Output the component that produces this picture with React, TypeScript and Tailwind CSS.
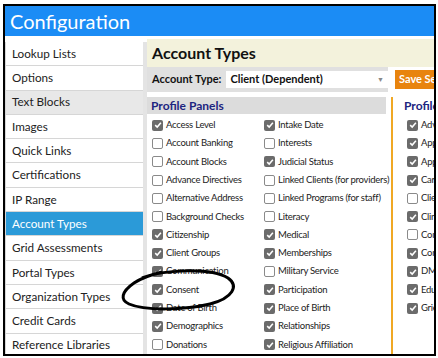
const menu = [
  "Lookup Lists",
  "Options",
  "Text Blocks",
  "Images",
  "Quick Links",
  "Certifications",
  "IP Range",
  "Account Types",
  "Grid Assessments",
  "Portal Types",
  "Organization Types",
  "Credit Cards",
  "Reference Libraries",
];

const colOne: [string, boolean][] = [
  ["Access Level", true],
  ["Account Banking", false],
  ["Account Blocks", false],
  ["Advance Directives", false],
  ["Alternative Address", false],
  ["Background Checks", false],
  ["Citizenship", true],
  ["Client Groups", true],
  ["Communication", true],
  ["Consent", true],
  ["Date of Birth", true],
  ["Demographics", true],
  ["Donations", false],
];

const colTwo: [string, boolean][] = [
  ["Intake Date", true],
  ["Interests", false],
  ["Judicial Status", true],
  ["Linked Clients (for providers)", false],
  ["Linked Programs (for staff)", false],
  ["Literacy", false],
  ["Medical", true],
  ["Memberships", true],
  ["Military Service", false],
  ["Participation", true],
  ["Place of Birth", true],
  ["Relationships", true],
  ["Religious Affiliation", true],
];

const colThree: [string, boolean][] = [
  ["Advocates", true],
  ["Appointments", true],
  ["Applications", true],
  ["Caregivers", true],
  ["Client Notes", false],
  ["Clinical", true],
  ["Complaints", false],
  ["Contacts", true],
  ["DME", true],
  ["Education", true],
  ["Grievances", true],
];

const Box = ({ checked }: { checked: boolean }) => (
  <span
    className={
      checked
        ? "w-[11px] h-[11px] rounded-[2px] bg-[#6b6b6b] flex items-center justify-center shrink-0"
        : "w-[11px] h-[11px] rounded-[2px] bg-white border border-[#8a8a8a] shrink-0"
    }
  >
    {checked && (
      <svg width="8" height="8" viewBox="0 0 10 10">
        <path d="M1.5 5.2 L4 7.6 L8.6 2.2" fill="none" stroke="white" strokeWidth="1.9" />
      </svg>
    )}
  </span>
);

const CheckList = ({ items }: { items: [string, boolean][] }) => (
  <div className="flex flex-col">
    {items.map(([label, checked]) => (
      <div key={label} className="h-[18.3px] flex items-center gap-[3px] whitespace-nowrap">
        <Box checked={checked} />
        <span className="text-[9.5px] tracking-[-0.25px] text-[#222]">{label}</span>
      </div>
    ))}
  </div>
);

export default function App() {
  return (
    <div className="w-[438px] h-[358px] bg-white overflow-hidden pt-[4px] pl-[3px] font-['Lato',sans-serif]">
      <div className="relative w-[433px] h-[352px] border-2 border-black overflow-hidden bg-white">
        <div className="h-[30px] bg-[#1b8cf5] flex items-center pl-[5px] text-white text-[20px] leading-none">
          Configuration
        </div>
        <div className="flex pt-[3px]">
          <div className="w-[142px] shrink-0 mt-[3px] flex flex-col border-r-[4px] border-[#e4e4e4]">
            {menu.map((m) => (
              <div
                key={m}
                className={
                  m === "Account Types"
                    ? "h-[24.3px] flex items-center pl-[6px] text-[11.7px] whitespace-nowrap bg-[#2b9ad8] text-white border-b border-l border-[#d6d6d6]"
                    : m === "Text Blocks"
                    ? "h-[24.3px] flex items-center pl-[6px] text-[11.7px] whitespace-nowrap bg-[#e8e8e8] text-[#222] border-b border-l border-[#d6d6d6]"
                    : "h-[24.3px] flex items-center pl-[6px] text-[11.7px] whitespace-nowrap bg-white text-[#222] border-b border-l border-[#d6d6d6]"
                }
              >
                {m}
              </div>
            ))}
          </div>
          <div className="flex-1 min-w-0 overflow-hidden flex flex-col">
            <div className="h-[28px] bg-[#f3f2dc] flex items-center pl-[5px] text-[16px] font-bold text-[#111]">
              Account Types
            </div>
            <div className="flex items-center h-[25px]">
              <div className="w-[241px] shrink-0 h-full bg-[#e0e0e0] flex items-center pl-[5px] gap-[5px]">
                <span className="text-[11px] font-bold text-[#111] whitespace-nowrap">Account Type:</span>
                <div className="w-[162px] h-[17px] bg-white flex items-center justify-between px-[4px]">
                  <span className="text-[11px] font-bold text-[#111]">Client (Dependent)</span>
                  <span className="text-[7px] text-[#888]">▼</span>
                </div>
              </div>
              <div className="ml-[7px] h-[19px] bg-[#e8840e] text-white text-[11px] font-bold flex items-center pl-[4px] w-[60px] shrink-0 whitespace-nowrap">
                Save Settings
              </div>
            </div>
            <div className="flex pt-[5px]">
              <div className="w-[239px] shrink-0 flex flex-col">
                <div className="h-[17px] bg-[#dcdcdc] flex items-center pl-[4px] text-[12px] font-bold text-[#1c2580]">
                  Profile Panels
                </div>
                <div className="flex pl-[5px] pt-[2px]">
                  <div className="w-[112px] shrink-0">
                    <CheckList items={colOne} />
                  </div>
                  <CheckList items={colTwo} />
                </div>
              </div>
              <div className="ml-[5px] w-[2px] shrink-0 bg-[#f0a824] h-[260px]" />
              <div className="flex flex-col pl-[11px] shrink-0">
                <div className="h-[17px] flex items-center text-[12px] font-bold text-[#1c2580] whitespace-nowrap">
                  Profile Panels
                </div>
                <div className="pt-[2px] pl-[3px]">
                  <CheckList items={colThree} />
                </div>
              </div>
            </div>
          </div>
        </div>
        {/* hand-drawn annotation circle */}
        <svg className="absolute left-[115px] top-[260px]" width="120" height="48" viewBox="0 0 120 48">
          <path
            d="M22 12 C42 4 90 1 108 12 C119 20 113 32 90 38 C65 44 25 45 9 38 C0 34 1 26 14 17 C20 13 30 9 42 6"
            fill="none"
            stroke="black"
            strokeWidth="3"
          />
        </svg>
      </div>
    </div>
  );
}
